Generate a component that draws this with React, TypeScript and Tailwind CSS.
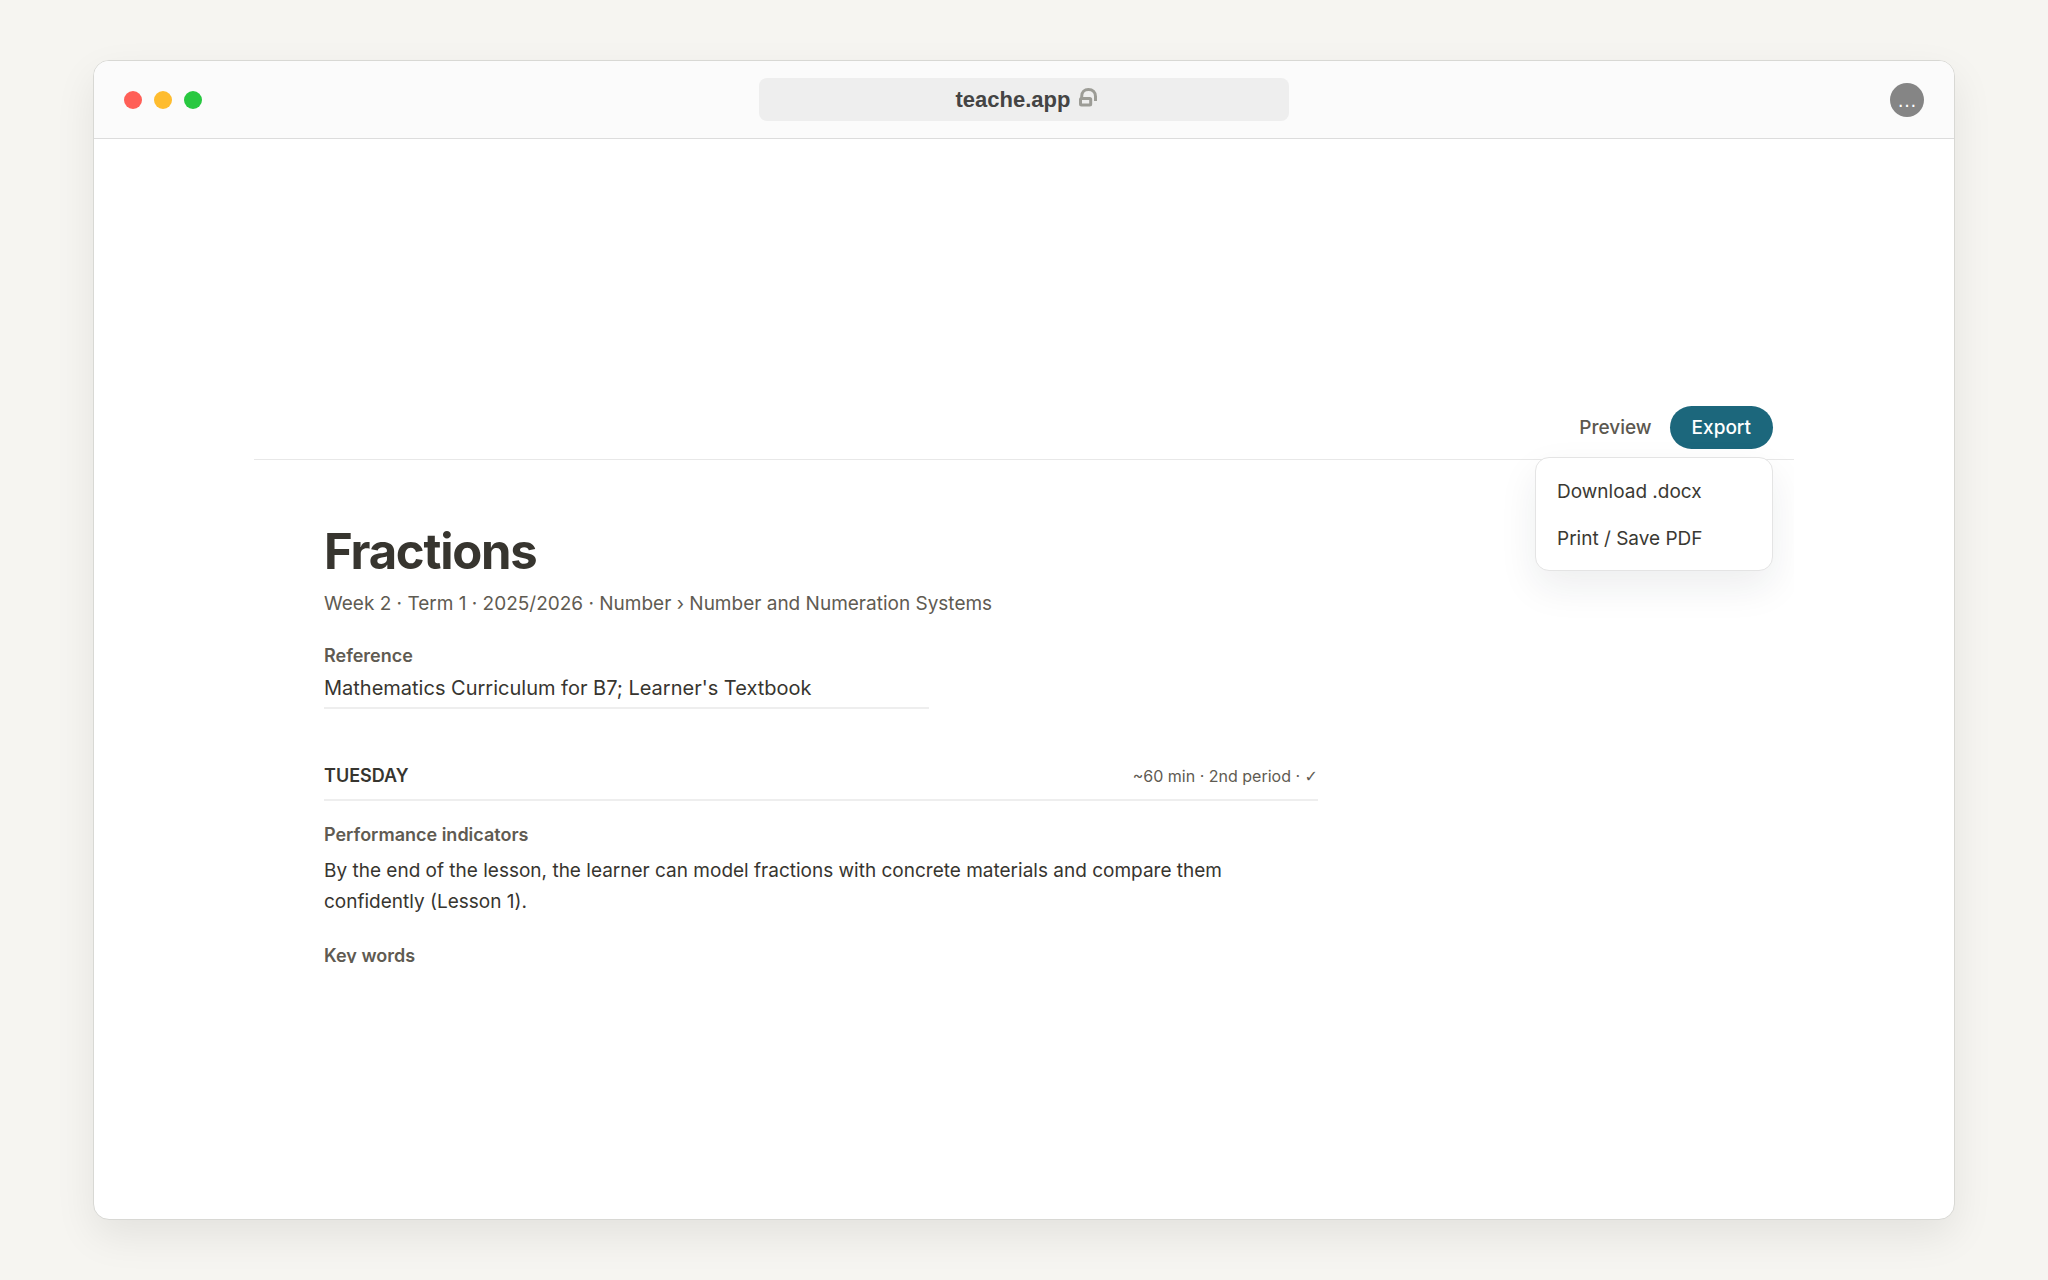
import React, { useState } from "react";

const MENU_ITEMS = ["Download .docx", "Print / Save PDF"];

function UnlockIcon() {
  return (
    <svg className="mb-1" width="18" height="19" viewBox="0 0 18 19" fill="none" stroke="#9c9c96" strokeWidth="3" aria-hidden="true">
      <rect x="1.5" y="10.5" width="10.2" height="6.6" rx="1" />
      <path d="M2.7 11V8.2C2.7 4 5.4 1.5 9.4 1.5c4.2 0 7.1 2.8 7.1 7V13" />
    </svg>
  );
}

function TitleBar() {
  return (
    <header className="grid grid-cols-[1fr_530px_1fr] items-center border-b border-[#dcdcdc] bg-[#fbfbfb] px-[30px] h-[78px]">
      <div className="flex gap-3">
        <span className="size-[18px] rounded-full bg-[#ff5f57]" />
        <span className="size-[18px] rounded-full bg-[#febc2e]" />
        <span className="size-[18px] rounded-full bg-[#28c840]" />
      </div>
      <div className="flex h-[43px] items-center justify-center gap-[9px] rounded-lg bg-[#eeeeee] pl-[5px] font-['Liberation_Sans',sans-serif] text-[22px] font-bold text-[#444444]">
        teache.app
        <UnlockIcon />
      </div>
      <button
        type="button"
        aria-label="More"
        className="flex size-[34px] items-center justify-center justify-self-end rounded-full bg-[#858585] font-['Liberation_Sans',sans-serif] text-xl leading-none text-white"
      >
        …
      </button>
    </header>
  );
}

function Toolbar() {
  const [open, setOpen] = useState(true);

  return (
    <div className="relative flex h-[65px] items-center justify-end gap-[18px] border-b border-[#e8e8e8] pr-[21px] text-[19px] font-medium">
      <button type="button" className="pt-0.5 text-[#5c584f]">Preview</button>
      <button
        type="button"
        onClick={() => setOpen(!open)}
        className="h-[43px] rounded-full bg-[#1c677c] px-[22px] pt-0.5 text-white"
      >
        Export
      </button>
      {open && (
        <div className="absolute top-[62px] right-[21px] flex w-[238px] flex-col rounded-[14px] border border-[#e4e4e4] bg-white pt-[11px] pb-[7px] font-normal text-[#3a3933] shadow-[0_16px_38px_rgba(20,40,50,0.08)]">
          {MENU_ITEMS.map((item) => (
            <button key={item} type="button" className="h-[47px] px-[21px] text-left">{item}</button>
          ))}
        </div>
      )}
    </div>
  );
}

function LessonNote() {
  return (
    <main className="w-[994px] max-w-full ml-[70px] pt-[61px] text-[#37352f]">
      <h1 className="text-[49px] leading-[62px] font-bold tracking-tight">Fractions</h1>
      <p className="mt-[7px] text-[19px] leading-7 text-[#5f5b52]">
        Week 2 · Term 1 · 2025/2026 · Number › Number and Numeration Systems
      </p>
      <label htmlFor="reference" className="mt-6 block text-[18px] leading-7 font-semibold text-[#5f5b52]">Reference</label>
      <input
        id="reference"
        defaultValue="Mathematics Curriculum for B7; Learner's Textbook"
        className="block h-[39px] w-[605px] border-b-2 border-[#eeeeee] pb-0.5 text-xl outline-none"
      />
      <section>
        <div className="mt-[53px] flex items-center justify-between border-b-2 border-[#eeeeee] pb-[9px]">
          <h2 className="text-[18px] leading-7 font-semibold">TUESDAY</h2>
          <span className="text-base text-[#5f5b52]">
            ~60 min · 2nd period · <span className="font-['DejaVu_Sans',sans-serif]">✓</span>
          </span>
        </div>
        <h3 className="mt-5 text-[18px] leading-7 font-semibold text-[#5f5b52]">Performance indicators</h3>
        <p className="mt-1.5 text-[19px] leading-[31px]">
          By the end of the lesson, the learner can model fractions with concrete materials and compare them confidently (Lesson 1).
        </p>
        <h3 className="mt-[25px] text-[18px] leading-7 font-semibold text-[#5f5b52]">Key words</h3>
      </section>
    </main>
  );
}

export default function App() {
  return (
    <div className="flex min-h-screen bg-[#f6f5f1] px-[93px] py-[60px]">
      <div className="flex flex-1 flex-col overflow-hidden rounded-2xl border border-[#d8d8d4] bg-white shadow-[0_16px_40px_rgba(0,0,0,0.08)]">
        <TitleBar />
        <div className="flex flex-1 flex-col justify-center px-40">
          {/* the note is cut off where the preview pane ends */}
          <div className="h-[568px] overflow-hidden font-['Inter',sans-serif]">
            <Toolbar />
            <LessonNote />
          </div>
        </div>
      </div>
    </div>
  );
}
